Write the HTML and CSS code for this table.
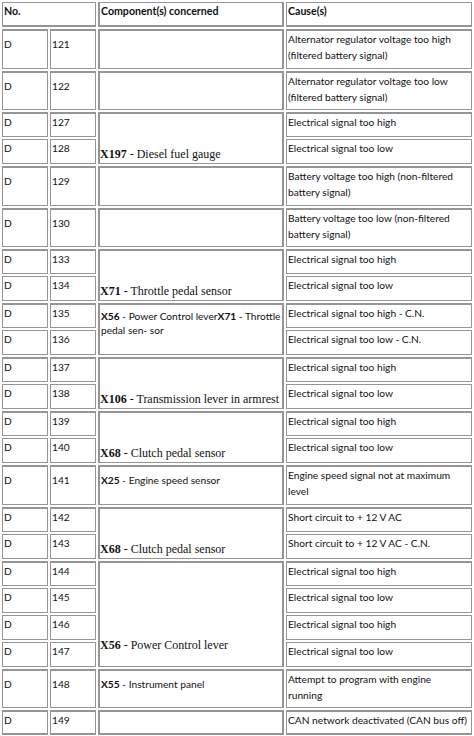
FILE: index.html
```html
<!DOCTYPE html>
<html>
<head>
<meta charset="utf-8">
<link rel="stylesheet" href="styles.css">
</head>
<body>
<table class="codes">
  <colgroup>
    <col class="c1"><col class="c2"><col class="c3"><col class="c4">
  </colgroup>
  <tr class="s"><th colspan="2">No.</th><th class="k">Component(s) concerned</th><th>Cause(s)</th></tr>
  <tr class="d g"><td class="n">D</td><td class="n">121</td><td class="k"></td><td>Alternator regulator voltage too high<br>(filtered battery signal)</td></tr>
  <tr class="d g"><td class="n">D</td><td class="n">122</td><td class="k"></td><td>Alternator regulator voltage too low<br>(filtered battery signal)</td></tr>
  <tr class="s g"><td>D</td><td>127</td><td class="k serif" rowspan="2"><b>X197</b> - Diesel fuel gauge</td><td>Electrical signal too high</td></tr>
  <tr class="s"><td>D</td><td>128</td><td>Electrical signal too low</td></tr>
  <tr class="d g"><td class="n">D</td><td class="n">129</td><td class="k"></td><td>Battery voltage too high (non-filtered<br>battery signal)</td></tr>
  <tr class="d g"><td class="n">D</td><td class="n">130</td><td class="k"></td><td>Battery voltage too low (non-filtered<br>battery signal)</td></tr>
  <tr class="s g"><td>D</td><td>133</td><td class="k serif" rowspan="2"><b>X71</b> - Throttle pedal sensor</td><td>Electrical signal too high</td></tr>
  <tr class="s"><td>D</td><td>134</td><td>Electrical signal too low</td></tr>
  <tr class="s g"><td>D</td><td>135</td><td class="k two" rowspan="2"><b>X56</b> - Power Control lever<b>X71</b> - Throttle<br>pedal sen- sor</td><td>Electrical signal too high - C.N.</td></tr>
  <tr class="s"><td>D</td><td>136</td><td>Electrical signal too low - C.N.</td></tr>
  <tr class="s g"><td>D</td><td>137</td><td class="k serif" rowspan="2"><b>X106</b> - Transmission lever in armrest</td><td>Electrical signal too high</td></tr>
  <tr class="s"><td>D</td><td>138</td><td>Electrical signal too low</td></tr>
  <tr class="s g"><td>D</td><td>139</td><td class="k serif" rowspan="2"><b>X68</b> - Clutch pedal sensor</td><td>Electrical signal too high</td></tr>
  <tr class="s"><td>D</td><td>140</td><td>Electrical signal too low</td></tr>
  <tr class="d g"><td class="n">D</td><td class="n">141</td><td class="k n"><b>X25</b> - Engine speed sensor</td><td>Engine speed signal not at maximum<br>level</td></tr>
  <tr class="s g"><td>D</td><td>142</td><td class="k serif" rowspan="2"><b>X68</b> - Clutch pedal sensor</td><td>Short circuit to + 12 V AC</td></tr>
  <tr class="s"><td>D</td><td>143</td><td>Short circuit to + 12 V AC - C.N.</td></tr>
  <tr class="s g"><td>D</td><td>144</td><td class="k serif tall" rowspan="4"><b>X56</b> - Power Control lever</td><td>Electrical signal too high</td></tr>
  <tr class="s"><td>D</td><td>145</td><td>Electrical signal too low</td></tr>
  <tr class="s"><td>D</td><td>146</td><td>Electrical signal too high</td></tr>
  <tr class="s"><td>D</td><td>147</td><td>Electrical signal too low</td></tr>
  <tr class="d g"><td class="n">D</td><td class="n">148</td><td class="k n"><b>X55</b> - Instrument panel</td><td>Attempt to program with engine<br>running</td></tr>
  <tr class="s g last"><td>D</td><td>149</td><td class="k"></td><td>CAN network deactivated (CAN bus off)</td></tr>
</table>
</body>
</html>
```

FILE: styles.css
```css
html, body {
  margin: 0;
  padding: 0;
  background: #ffffff;
}

.codes {
  border-collapse: separate;
  border-spacing: 2px;
  table-layout: fixed;
  width: 474px;
  font-family: Lato, "Liberation Sans", sans-serif;
  font-size: 10.2px;
  line-height: 16px;
  color: #111111;
}

.c1, .c2 { width: 46px; }
.c3, .c4 { width: 186px; }

.codes th,
.codes td {
  border: 1px solid #959595;
  padding: 0 1px;
  vertical-align: top;
  text-align: left;
  white-space: nowrap;
  overflow: hidden;
}

.codes th {
  font-weight: bold;
  font-size: 10.6px;
  border-bottom-width: 2px;
}

.codes tr.g td { border-top-width: 2px; }
.codes tr.last td { border-bottom-width: 2px; }

.codes .k {
  border-left-width: 2px;
  border-right-width: 2px;
}

.s { height: 25px; }
.d { height: 39.5px; }

.codes td.n { padding-top: 5px; }

.codes td.serif {
  font-family: "Liberation Serif", "Times New Roman", serif;
  font-size: 12px;
  vertical-align: bottom;
  padding: 0 0 1px 0;
}

.codes td.tall { padding-bottom: 13px; }

.codes td.two {
  line-height: 14px;
  padding-top: 4px;
}
```
